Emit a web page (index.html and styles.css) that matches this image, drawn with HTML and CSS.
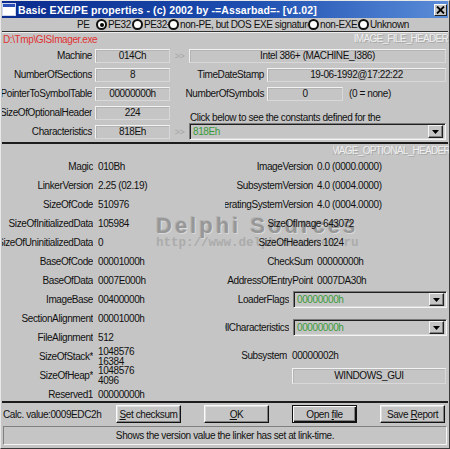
FILE: index.html
```html
<!DOCTYPE html>
<html>
<head>
<meta charset="utf-8">
<link rel="stylesheet" href="styles.css">
</head>
<body>
<div class="window">
  <div class="titlebar">
    <span class="appicon"></span>
    <span class="title">Basic EXE/PE properties - (c) 2002 by -=Assarbad=- [v1.02]</span>
    <span class="closebtn"><svg width="9" height="8" viewBox="0 0 9 8"><path d="M1 0.5 L8 7.5 M8 0.5 L1 7.5" stroke="#000" stroke-width="1.8"/></svg></span>
  </div>
  <div class="radios">
    <span class="caption">PE</span>
    <span class="radio w36"><span class="dot checked"></span><span>PE32</span></span>
    <span class="radio w36"><span class="dot"></span><span>PE32+</span></span>
    <span class="radio w140"><span class="dot"></span><span>non-PE, but DOS EXE signature</span></span>
    <span class="radio w50"><span class="dot"></span><span>non-EXE?</span></span>
    <span class="radio w60"><span class="dot"></span><span>Unknown</span></span>
  </div>
  <div class="groove"></div>
  <div class="fileline">
    <span class="path">D:\Tmp\GISImager.exe</span>
    <span class="sect">IMAGE_FILE_HEADER</span>
  </div>
  <div class="fh">
    <div class="hrow">
      <span class="hl"><span>Machine</span></span><span class="box hbox">014Ch</span>
      <span class="arrow">&gt;&gt;</span><span class="box wide">Intel 386+ (MACHINE_I386)</span>
    </div>
    <div class="hrow">
      <span class="hl"><span>NumberOfSections</span></span><span class="box hbox">8</span>
      <span class="hr">TimeDateStamp</span><span class="box stamp">19-06-1992@17:22:22</span>
    </div>
    <div class="hrow">
      <span class="hl"><span>PointerToSymbolTable</span></span><span class="box hbox">00000000h</span>
      <span class="hr">NumberOfSymbols</span><span class="box syms">0</span><span class="note">(0 = none)</span>
    </div>
    <div class="hrow">
      <span class="hl"><span>SizeOfOptionalHeader</span></span><span class="box hbox">224</span>
      <span class="click">Click below to see the constants defined for the</span>
    </div>
    <div class="hrow">
      <span class="hl"><span>Characteristics</span></span><span class="box hbox">818Eh</span>
      <span class="arrow">&gt;&gt;</span>
      <span class="combo cwide"><span class="cval">818Eh</span><span class="dropbtn"><svg width="7" height="4" viewBox="0 0 7 4"><path d="M0 0 H7 L3.5 4 Z" fill="#000"/></svg></span></span>
    </div>
  </div>
  <div class="sep"></div>
  <div class="sect-opt"><span>IMAGE_OPTIONAL_HEADER</span></div>
  <div class="oh">
    <div class="col">
      <div class="r"><span class="l">Magic</span><span class="v">010Bh</span></div>
      <div class="r"><span class="l">LinkerVersion</span><span class="v">2.25 (02.19)</span></div>
      <div class="r"><span class="l">SizeOfCode</span><span class="v">510976</span></div>
      <div class="r"><span class="l">SizeOfInitializedData</span><span class="v">105984</span></div>
      <div class="r"><span class="l">SizeOfUninitializedData</span><span class="v">0</span></div>
      <div class="r"><span class="l">BaseOfCode</span><span class="v">00001000h</span></div>
      <div class="r"><span class="l">BaseOfData</span><span class="v">0007E000h</span></div>
      <div class="r"><span class="l">ImageBase</span><span class="v">00400000h</span></div>
      <div class="r"><span class="l">SectionAlignment</span><span class="v">00001000h</span></div>
      <div class="r"><span class="l">FileAlignment</span><span class="v">512</span></div>
      <div class="r"><span class="l">SizeOfStack*</span><span class="v v2"><span>1048576</span><span>16384</span></span></div>
      <div class="r"><span class="l">SizeOfHeap*</span><span class="v v2"><span>1048576</span><span>4096</span></span></div>
      <div class="r"><span class="l">Reserved1</span><span class="v">00000000h</span></div>
    </div>
    <div class="col">
      <div class="r"><span class="l rl">ImageVersion</span><span class="v rv">0.0 (0000.0000)</span></div>
      <div class="r"><span class="l rl">SubsystemVersion</span><span class="v rv">4.0 (0004.0000)</span></div>
      <div class="r"><span class="l rl">OperatingSystemVersion</span><span class="v rv">4.0 (0004.0000)</span></div>
      <div class="r"><span class="l rl-wide">SizeOfImage</span><span class="v rv-tight">643072</span></div>
      <div class="r"><span class="l rl-wide">SizeOfHeaders</span><span class="v rv-tight">1024</span></div>
      <div class="r"><span class="l rl">CheckSum</span><span class="v rv">00000000h</span></div>
      <div class="r"><span class="l rl">AddressOfEntryPoint</span><span class="v rv">0007DA30h</span></div>
      <div class="r"><span class="l rl-combo">LoaderFlags</span>
        <span class="combo cright"><span class="cval">00000000h</span><span class="dropbtn"><svg width="7" height="4" viewBox="0 0 7 4"><path d="M0 0 H7 L3.5 4 Z" fill="#000"/></svg></span></span></div>
      <div class="r gap9"><span class="l rl-combo">DllCharacteristics</span>
        <span class="combo cright"><span class="cval">00000000h</span><span class="dropbtn"><svg width="7" height="4" viewBox="0 0 7 4"><path d="M0 0 H7 L3.5 4 Z" fill="#000"/></svg></span></span></div>
      <div class="r gap9"><span class="l rl-sub">Subsystem</span><span class="v rv-sub">00000002h</span></div>
      <div class="box guibox">WINDOWS_GUI</div>
    </div>
    <div class="watermark">
      <div class="wm-big">Delphi Sources</div>
      <div class="wm-url">http://www.delphisources.ru</div>
    </div>
  </div>
  <div class="sep2"></div>
  <div class="buttons">
    <span class="calc">Calc. value:0009EDC2h</span>
    <span class="btn"><span><u>S</u>et checksum</span></span>
    <span class="btn"><span><u>O</u>K</span></span>
    <span class="btn default"><span>Open <u>f</u>ile</span></span>
    <span class="btn"><span>Save <u>R</u>eport</span></span>
  </div>
  <div class="status">Shows the version value the linker has set at link-time.</div>
</div>
</body>
</html>
```

FILE: styles.css
```css
* { box-sizing: border-box; }
html, body { margin: 0; padding: 0; }
body {
  width: 450px;
  height: 449px;
  overflow: hidden;
  background: #c5c5c5;
  font-family: "Liberation Sans", Arial, sans-serif;
  font-size: 10px;
  letter-spacing: -0.4px;
  color: #111;
}
.window {
  position: relative;
  z-index: 0;
  width: 450px;
  height: 449px;
  overflow: hidden;
  border: 1px solid;
  border-color: #e8e8e8 #3a3a3a #3a3a3a #e8e8e8;
  padding: 0 1px 1px 1px;
  background: #c5c5c5;
  display: flex;
  flex-direction: column;
}
.titlebar {
  height: 17px;
  flex: none;
  display: flex;
  align-items: center;
  background: linear-gradient(to right, #0a2c8e 0%, #1c4eb0 55%, #5a8cd8 100%);
  color: #fff;
  font-weight: bold;
  font-size: 10.5px;
  letter-spacing: 0.1px;
  padding-left: 1px;
}
.appicon {
  width: 12px;
  height: 11px;
  background: #fff;
  border-top: 3px solid #2a50b8;
  outline: 1px solid #d0d8f0;
  flex: none;
}
.title { margin-left: 3px; white-space: nowrap; }
.closebtn {
  margin-left: auto;
  margin-right: 1px;
  width: 13px;
  height: 12px;
  background: #c5c5c5;
  border: 1px solid;
  border-color: #fff #202020 #202020 #fff;
  display: flex;
  align-items: center;
  justify-content: center;
}
.radios {
  height: 13px;
  flex: none;
  display: flex;
  align-items: center;
  padding-left: 75px;
  white-space: nowrap;
}
.caption { width: 19px; }
.radio {
  display: flex;
  align-items: center;
  overflow: hidden;
  flex: none;
}
.radio > span:last-child { margin-left: 1px; }
.w36 { width: 36px; }
.w140 { width: 140px; }
.w50 { width: 50px; }
.w60 { width: 60px; }
.dot {
  width: 11px;
  height: 11px;
  border-radius: 50%;
  background: #fff;
  border: 2px solid #111;
  flex: none;
  position: relative;
}
.dot.checked::after {
  content: "";
  position: absolute;
  left: 1.5px;
  top: 1.5px;
  width: 4px;
  height: 4px;
  border-radius: 50%;
  background: #000;
}
.groove {
  height: 2px;
  flex: none;
  border-top: 1px solid #303030;
  border-bottom: 1px solid #ededed;
}
.fileline {
  height: 13px;
  flex: none;
  display: flex;
  align-items: center;
  justify-content: space-between;
  white-space: nowrap;
}
.path { color: #e03232; margin-left: 1px; }
.sect {
  color: #f0f0f0;
  text-shadow: 1px 1px 0 #a8a8a8;
  letter-spacing: -0.7px;
  margin-top: -2px;
}
.fh { flex: none; }
.hrow {
  height: 19px;
  display: flex;
  align-items: center;
  white-space: nowrap;
}
.hl {
  width: 90px;
  display: flex;
  justify-content: flex-end;
  flex: none;
  overflow: hidden;
}
.box {
  height: 14px;
  line-height: 12px;
  text-align: center;
  border: 1px solid;
  border-color: #f2f2f2 #d8d8d8 #d8d8d8 #f2f2f2;
  box-shadow: inset 1px 1px 0 #b4b4b4;
  flex: none;
  white-space: nowrap;
  overflow: hidden;
}
.hbox { margin-left: 3px; width: 75px; }
.arrow { width: 19px; text-align: center; color: #a4a4a4; flex: none; font-size: 9px; }
.wide { width: 257px; }
.hr { width: 94px; text-align: right; flex: none; }
.stamp { margin-left: 3px; width: 179px; }
.syms { margin-left: 3px; width: 76px; }
.note { margin-left: 6px; }
.click { margin-left: 20px; align-self: flex-end; margin-bottom: -1px; }
.combo {
  height: 17px;
  border: 1px solid;
  border-color: #7a7a7a #f4f4f4 #f4f4f4 #7a7a7a;
  box-shadow: inset 1px 1px 0 #202020, inset -1px -1px 0 #d8d8d8;
  display: flex;
  align-items: center;
  padding: 0 2px 0 3px;
  flex: none;
}
.cwide { width: 257px; }
.cright { margin-left: 4px; width: 154px; }
.cval { color: #3a9a3a; flex: 1; }
.dropbtn {
  width: 15px;
  height: 13px;
  border: 1px solid;
  border-color: #f4f4f4 #202020 #202020 #f4f4f4;
  box-shadow: inset -1px -1px 0 #808080;
  display: flex;
  align-items: center;
  justify-content: center;
  background: #c5c5c5;
}
.sep {
  height: 2px;
  margin-top: 1px;
  flex: none;
  background: #1c1c1c;
}
.sect-opt {
  height: 13px;
  flex: none;
  display: flex;
  justify-content: flex-end;
  align-items: center;
  overflow: hidden;
  margin-left: 331px;
  margin-right: -2px;
  white-space: nowrap;
}
.sect-opt span {
  color: #f0f0f0;
  text-shadow: 1px 1px 0 #a8a8a8;
  letter-spacing: -0.7px;
}
.oh {
  position: relative;
  height: 244px;
  flex: none;
  display: grid;
  grid-template-columns: 223px 1fr;
  align-items: start;
}
.col { display: flex; flex-direction: column; }
.r {
  height: 19px;
  display: flex;
  align-items: center;
  white-space: nowrap;
  flex: none;
}
.l {
  width: 91px;
  display: flex;
  justify-content: flex-end;
  overflow: hidden;
  flex: none;
}
.v { margin-left: 5px; }
.v2 { display: flex; flex-direction: column; line-height: 9.5px; }
.rl { width: 88px; }
.rv { margin-left: 4px; }
.rl-wide { width: 96px; }
.rv-tight { margin-left: 2px; }
.rl-combo { width: 64px; }
.rl-sub { width: 62px; }
.rv-sub { margin-left: 5px; }
.gap9 { margin-top: 9px; }
.guibox {
  margin-top: 3px;
  margin-left: 67px;
  width: 154px;
  height: 16px;
  line-height: 14px;
}
.watermark {
  position: absolute;
  z-index: -1;
  left: 154px;
  top: 56px;
  white-space: nowrap;
  letter-spacing: 0;
}
.wm-big {
  font-family: "Liberation Sans", Arial, sans-serif;
  font-weight: bold;
  font-size: 22px;
  letter-spacing: 3px;
  line-height: 25px;
  color: #979797;
  text-shadow: 1px 1px 0 #dadada, -1px -1px 0 #b4b4b4;
}
.wm-url {
  font-family: "Liberation Mono", "Courier New", monospace;
  font-weight: bold;
  font-size: 12.5px;
  line-height: 14px;
  margin-top: -2px;
  color: #ababab;
}
.sep2 {
  height: 2px;
  flex: none;
  background: #1c1c1c;
}
.buttons {
  height: 22px;
  flex: none;
  display: grid;
  grid-template-columns: 90px repeat(4, 65px);
  column-gap: 23px;
  align-items: center;
  padding-left: 1px;
  white-space: nowrap;
}
.btn {
  height: 18px;
  border: 1px solid;
  border-color: #fafafa #111 #111 #fafafa;
  box-shadow: inset -1px -1px 0 #808080, inset 1px 1px 0 #dedede;
  display: flex;
  align-items: center;
  justify-content: center;
}
.btn.default {
  border-color: #111;
  box-shadow: inset 1px 1px 0 #fafafa, inset -1px -1px 0 #111, inset -2px -2px 0 #808080;
}
.status {
  margin: 1px 1px 0 1px;
  height: 19px;
  flex: none;
  border: 1px solid;
  border-color: #808080 #f4f4f4 #f4f4f4 #808080;
  display: flex;
  align-items: center;
  justify-content: center;
  white-space: nowrap;
}
```
